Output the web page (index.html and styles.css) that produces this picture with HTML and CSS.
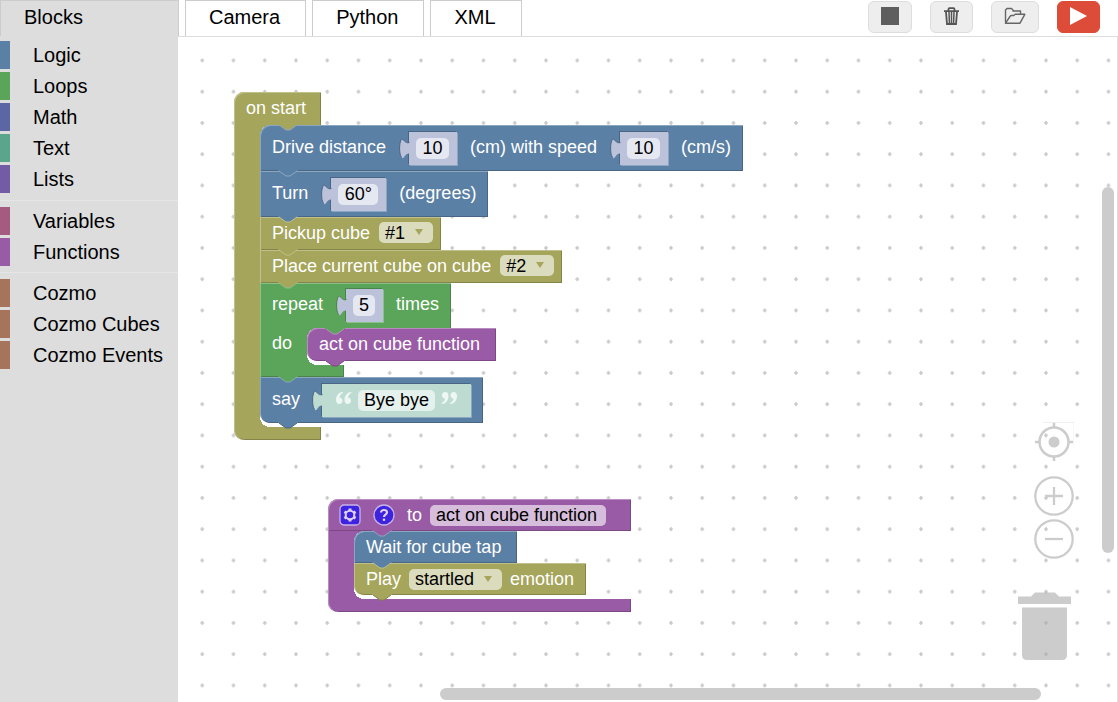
FILE: index.html
```html
<!DOCTYPE html>
<html lang="en">
<head>
<meta charset="utf-8">
<meta name="viewport" content="width=device-width, initial-scale=1">
<title>Blocks</title>
<link rel="stylesheet" href="styles.css">
</head>
<body>
<svg class="defs" aria-hidden="true">
  <symbol id="tab" viewBox="0 0 20 7">
    <path class="tab-fill" d="M0 0H20V1H19L12 6H8L1 1H0Z"/>
    <path class="tab-line" d="M1 1L8 6H12L19 1"/>
  </symbol>
  <symbol id="plug" viewBox="0 0 11 27">
    <path class="plug-fill" d="M11 10.500C8 11.500 6.500 10 5 8.500C3.500 7 2.500 6.500 2 8C1 10.500.6 13 .6 16C.6 20 1 23 2.500 25.500C3.500 27 4.500 26 5.500 24.500C7 22 8.500 21 11 21.500Z"/>
    <path class="plug-line" d="M10.500 10.500C8 11.500 6.500 10 5 8.500C3.500 7 2.500 6.500 2 8C1 10.500.6 13 .6 16C.6 20 1 23 2.500 25.500"/>
  </symbol>
  <symbol id="quote" viewBox="0 0 16 12">
    <path d="M7 0C3 0 0 3.500 0 8c0 2.500 1.300 4 3.300 4s3.200-1.400 3.200-3.200S5.300 5.500 3.500 5.500C3.800 3.500 5 2 7 1zM15.500 0C11.500 0 8.500 3.500 8.500 8c0 2.500 1.300 4 3.300 4s3.200-1.400 3.200-3.200-1.200-3.300-3-3.300c.3-2 1.500-3.500 3.500-4.500z"/>
  </symbol>
</svg>

<header class="topbar">
  <nav class="tabs">
    <button class="tab tab-active" type="button">Blocks</button>
    <button class="tab" type="button">Camera</button>
    <button class="tab" type="button">Python</button>
    <button class="tab" type="button">XML</button>
  </nav>
  <div class="actions">
    <button class="action action-stop" type="button" aria-label="Stop">
      <svg width="18" height="18" viewBox="0 0 18 18"><path fill="#5e5e5e" d="M0 0h18v18H0z"/></svg>
    </button>
    <button class="action" type="button" aria-label="Discard">
      <svg width="17" height="18" viewBox="0 0 17 18" fill="none" stroke="#555">
        <path stroke-width="1.800" d="M1 4.200h15M5.500 4V2.200q0-1 1-1h4q1 0 1 1V4"/>
        <path stroke-width="1.800" d="M3 5l1 12h9l1-12"/>
        <path stroke-width="1.500" d="M6 5l.4 11M8.500 5v11M11 5l-.4 11"/>
      </svg>
    </button>
    <button class="action action-wide" type="button" aria-label="Open">
      <svg width="22" height="18" viewBox="0 0 22 18" fill="none" stroke="#666" stroke-width="1.400" stroke-linejoin="round">
        <path d="M1.500 15.500V3L3 1.500h4.500L9 3v1h7.500v4"/>
        <path d="M1.500 16.200L6 9.500q.5-1 1.500-1h2.200l1.500-1.200h9.600L16 16.200z"/>
      </svg>
    </button>
    <button class="action action-run" type="button" aria-label="Run">
      <svg width="18" height="18" viewBox="0 0 18 18"><path fill="#fff" d="M0 0l17 9-17 9z"/></svg>
    </button>
  </div>
</header>

<main class="editor">
  <nav class="toolbox">
    <ul class="group">
      <li><a class="category logic" href="#logic">Logic</a></li>
      <li><a class="category loops" href="#loops">Loops</a></li>
      <li><a class="category math" href="#math">Math</a></li>
      <li><a class="category text" href="#text">Text</a></li>
      <li><a class="category lists" href="#lists">Lists</a></li>
    </ul>
    <ul class="group">
      <li><a class="category variables" href="#variables">Variables</a></li>
      <li><a class="category functions" href="#functions">Functions</a></li>
    </ul>
    <ul class="group">
      <li><a class="category cozmo" href="#cozmo">Cozmo</a></li>
      <li><a class="category cozmo" href="#cubes">Cozmo Cubes</a></li>
      <li><a class="category cozmo" href="#events">Cozmo Events</a></li>
    </ul>
  </nav>

  <section class="workspace" aria-label="Workspace">
    <svg class="grid" aria-hidden="true">
      <defs>
        <pattern id="dots" width="25" height="25" patternUnits="userSpaceOnUse" patternTransform="translate(8.600 7.800) scale(1.250)">
          <path d="M11 12.500h3M12.500 11v3" stroke="#c8c8c8" stroke-width="1.300"/>
        </pattern>
      </defs>
      <rect width="100%" height="100%" fill="url(#dots)"/>
    </svg>

    <div class="stack stack-start">
      <div class="wrap olive">
        <div class="head">
          <span>on start</span>
          <svg class="notch notch-inner next-blue"><use href="#tab"/></svg>
        </div>
        <div class="mouth">
          <div class="bar"></div>
          <div class="body">
            <div class="block value-row blue">
              <label for="distance">Drive distance</label>
              <span class="value number"><svg class="plug"><use href="#plug"/></svg><input id="distance" class="field w-two" value="10"></span>
              <label for="speed">(cm) with speed</label>
              <span class="value number"><svg class="plug"><use href="#plug"/></svg><input id="speed" class="field w-two" value="10"></span>
              <span>(cm/s)</span>
              <svg class="notch next-blue"><use href="#tab"/></svg>
            </div>
            <div class="block value-row blue">
              <label for="angle">Turn</label>
              <span class="value number"><svg class="plug"><use href="#plug"/></svg><input id="angle" class="field w-three" value="60°"></span>
              <span>(degrees)</span>
              <svg class="notch next-olive"><use href="#tab"/></svg>
            </div>
            <div class="block ends-drop olive">
              <label for="pickup">Pickup cube</label>
              <span class="drop"><select id="pickup" class="field"><option>#1</option></select></span>
              <svg class="notch next-olive"><use href="#tab"/></svg>
            </div>
            <div class="block ends-drop olive">
              <label for="place">Place current cube on cube</label>
              <span class="drop"><select id="place" class="field"><option>#2</option></select></span>
              <svg class="notch next-green"><use href="#tab"/></svg>
            </div>
            <div class="wrap green">
              <div class="block value-row green">
                <label for="times">repeat</label>
                <span class="value number"><svg class="plug"><use href="#plug"/></svg><input id="times" class="field w-one" value="5"></span>
                <span>times</span>
              </div>
              <div class="mouth">
                <div class="bar bar-do">do</div>
                <div class="body">
                  <div class="block plain purple">
                    <svg class="notch notch-top in-green"><use href="#tab"/></svg>
                    <span>act on cube function</span>
                    <svg class="notch next-none"><use href="#tab"/></svg>
                  </div>
                </div>
              </div>
              <div class="foot foot-do">
                <svg class="notch next-blue"><use href="#tab"/></svg>
              </div>
            </div>
            <div class="block value-row blue">
              <label for="phrase">say</label>
              <span class="value string"><svg class="plug"><use href="#plug"/></svg><svg class="quote"><use href="#quote"/></svg><input id="phrase" class="field w-phrase" value="Bye bye"><svg class="quote quote-end"><use href="#quote"/></svg></span>
              <svg class="notch next-none"><use href="#tab"/></svg>
            </div>
          </div>
        </div>
        <div class="foot"></div>
      </div>
    </div>

    <div class="stack stack-function">
      <div class="wrap purple">
        <div class="head head-function">
          <button class="badge" type="button" aria-label="Settings">
            <svg width="22" height="22" viewBox="0 0 22 22">
              <rect x="1" y="1" width="20" height="20" rx="4" fill="#3d22df" stroke="#c8b2e8" stroke-width="1.300"/>
              <circle cx="11" cy="11" r="4.300" fill="none" stroke="#e0d2f2" stroke-width="2"/>
              <path stroke="#e0d2f2" stroke-width="3" d="M11 4.500v2M11 15.500v2M5.400 7.800l1.700 1M14.900 13.200l1.700 1M5.400 14.200l1.700-1M14.900 8.800l1.700-1"/>
            </svg>
          </button>
          <button class="badge" type="button" aria-label="Help">
            <svg width="22" height="22" viewBox="0 0 22 22">
              <circle cx="11" cy="11" r="10" fill="#3d22df" stroke="#c8b2e8" stroke-width="1.300"/>
              <path fill="none" stroke="#e0d2f2" stroke-width="2.200" d="M8 8.500q.2-2.500 3-2.500t3 2.300q0 1.300-1.500 2.300T11 13"/>
              <circle cx="11" cy="15.800" r="1.300" fill="#e0d2f2"/>
            </svg>
          </button>
          <label for="fn">to</label>
          <input id="fn" class="field w-name" value="act on cube function">
          <svg class="notch notch-inner next-blue"><use href="#tab"/></svg>
        </div>
        <div class="mouth">
          <div class="bar"></div>
          <div class="body">
            <div class="block plain blue">
              <span>Wait for cube tap</span>
              <svg class="notch next-olive"><use href="#tab"/></svg>
            </div>
            <div class="block olive">
              <label for="emotion">Play</label>
              <span class="drop"><select id="emotion" class="field"><option>startled</option></select></span>
              <span>emotion</span>
              <svg class="notch next-none"><use href="#tab"/></svg>
            </div>
          </div>
        </div>
        <div class="foot foot-function"></div>
      </div>
    </div>

    <div class="zoom">
      <button class="round" type="button" aria-label="Center">
        <svg width="40" height="40" viewBox="0 0 40 40" fill="none" stroke="#ccc" stroke-width="2.500">
          <circle cx="20" cy="20" r="14.500"/><circle cx="20" cy="20" r="5.500" fill="#ccc" stroke="none"/>
          <path d="M20 1v5M20 34v5M1 20h5M34 20h5"/>
          <path d="M9 .5h31v23" stroke="#eee" stroke-width="1"/>
        </svg>
      </button>
      <div class="zoom-pair">
        <button class="round" type="button" aria-label="Zoom in">
          <svg width="40" height="40" viewBox="0 0 40 40" fill="none" stroke="#ccc" stroke-width="2.300">
            <circle cx="20" cy="20" r="18.700"/><path d="M11 20h18M20 11v18"/>
          </svg>
        </button>
        <button class="round" type="button" aria-label="Zoom out">
          <svg width="40" height="40" viewBox="0 0 40 40" fill="none" stroke="#ccc" stroke-width="2.300">
            <circle cx="20" cy="20" r="18.700"/><path d="M11 20h18"/>
          </svg>
        </button>
      </div>
    </div>
    <svg class="trash" width="54" height="68" viewBox="0 0 54 68" role="img" aria-label="Trash">
      <path d="M1 4.500h13l4-4h20l4 4h12V12H1zM5 15.500h45V63q0 5-5 5H10q-5 0-5-5z"/>
    </svg>
    <div class="scroll scroll-y"></div>
    <div class="scroll scroll-x"></div>
  </section>
</main>
</body>
</html>
```
FILE: styles.css
```css
* { box-sizing: border-box; }

body {
  margin: 0;
  min-height: 100vh;
  display: flex;
  flex-direction: column;
  background: #fff;
  color: #000;
  font: 20px/28px "Liberation Sans", Arial, sans-serif;
}

button, input, select { font: inherit; color: inherit; margin: 0; }

.defs { position: absolute; width: 0; height: 0; }

/* Top bar */
.topbar { display: flex; justify-content: space-between; height: 36px; }
.tabs { display: flex; gap: 6px; }
.tab {
  padding: 0 25px 2px 23px;
  border: 1px solid #ccc;
  border-bottom: 0;
  background: #fff;
  line-height: 33px;
}
.tab-active {
  width: 179px;
  background: #ddd;
  text-align: left;
}
.actions { display: flex; gap: 18px; padding: 1px 18px 3px 0; }
.action {
  display: flex;
  align-items: center;
  justify-content: center;
  width: 43px;
  padding: 0 0 2px;
  border: 1px solid #ddd;
  border-radius: 6px;
  background: #eee;
}
.action-stop { width: 44px; }
.action-wide { width: 48px; }
.action-run { border-color: #dd4b39; background: #dd4b39; }

/* Toolbox */
.editor { display: flex; flex: 1; }
.toolbox { width: 178px; padding-top: 5px; background: #ddd; }
.group {
  display: flex;
  flex-direction: column;
  gap: 3px;
  margin: 0;
  padding: 0 0 6px;
  list-style: none;
}
.group:first-child { padding-bottom: 7px; }
.group + .group { border-top: 1px solid #e5e5e5; padding-top: 6px; }
.category {
  display: block;
  height: 28px;
  padding-left: 23px;
  border-left: 10px solid;
  color: #000;
  text-decoration: none;
}
.logic { border-color: #5b80a5; }
.loops { border-color: #5ba55b; }
.math { border-color: #5b67a5; }
.text { border-color: #5ba58c; }
.lists { border-color: #745ba5; }
.variables { border-color: #a55b80; }
.functions { border-color: #995ba5; }
.cozmo { border-color: #a5745b; }

/* Workspace */
.workspace {
  position: relative;
  flex: 1;
  overflow: hidden;
  border: solid #ddd;
  border-width: 1px 1px 0 0;
  color: #fff;
  font-size: 18px;
  line-height: 20px;
}
.grid { position: absolute; inset: 0; width: 100%; height: 100%; }
.stack { position: absolute; }
.stack-start { left: 56px; top: 55px; --row: 33px; }
.stack-function { left: 150px; top: 462px; --row: 32px; }

.blue { --fill: #5b80a5; --light: #8ca6c0; --dark: #496684; }
.olive { --fill: #a5a55b; --light: #c0c08c; --dark: #848449; }
.green { --fill: #5ba55b; --light: #8cc08c; --dark: #498449; }
.purple { --fill: #995ba5; --light: #b88cc0; --dark: #7a4984; }
.next-blue { --line: #8ca6c0; }
.next-olive { --line: #c0c08c; }
.next-green { --line: #8cc08c; }
.next-none { --line: var(--dark); }

.wrap { display: flex; flex-direction: column; align-items: flex-start; }
.head, .block {
  position: relative;
  display: flex;
  align-items: center;
  gap: 9px;
  width: max-content;
  min-height: var(--row);
  padding: 0 12px 2px;
  background: var(--fill);
  box-shadow: inset 1px 1px var(--light), inset -1px -1px var(--dark);
  white-space: nowrap;
}
.plain { padding-right: 16px; }
.ends-drop { padding-right: 8px; }
.stack-function .block { padding-bottom: 0; gap: 8px; }
.head { border-top-left-radius: 10px; padding-right: 15px; box-shadow: inset 1px 1px var(--light), inset -1px 0 var(--dark); }
.head-function { gap: 12px; padding: 0 25px 0 11px; box-shadow: inset 1px 1px var(--light), inset -1px -1px var(--dark); }
.head-function .field { margin-left: -4px; }
.value-row { min-height: 46px; gap: 13px; padding-bottom: 3px; }
.wrap > .value-row { min-height: 45px; box-shadow: inset 1px 1px var(--light), inset -1px 0 var(--dark); }
.mouth { display: flex; }
.bar { width: 26px; background: var(--fill); box-shadow: inset 1px 0 var(--light); }
.bar-do { width: 47px; padding: 5px 12px; }
.body {
  padding-bottom: 4px;
  background:
    radial-gradient(circle at 100% 100%, transparent 10px, var(--fill) 10px) 0 0 / 10px 10px no-repeat,
    radial-gradient(circle at 100% 0, transparent 10px, var(--fill) 10px) 0 100% / 10px 10px no-repeat;
}
.body > .block:first-child { border-top-left-radius: 10px; }
.body > .block:last-child { border-bottom-left-radius: 10px; }
.foot {
  position: relative;
  width: 87px;
  height: 13px;
  border-bottom-left-radius: 10px;
  background: var(--fill);
  box-shadow: inset 1px 0 var(--light), inset -1px -1px var(--dark);
}
.foot-do { width: 84px; height: 12px; border-radius: 0; }
.foot-function { width: 303px; }

/* Connector between stacked blocks */
.notch { position: absolute; z-index: 1; left: 18px; bottom: -6px; width: 20px; height: 7px; }
.notch-inner { left: 44px; }
.notch-top { top: 0; bottom: auto; }
.in-green { --fill: #5ba55b; --line: #b88cc0; }
.tab-fill { fill: var(--fill); }
.tab-line { fill: none; stroke: var(--line); }

/* Plugged-in values */
.value {
  position: relative;
  display: flex;
  align-items: center;
  height: 33px;
  margin: 3px 0 0 10px;
  padding: 0 8px 0 7px;
  background: var(--shade);
  box-shadow: -1px -1px var(--dark), 1px 1px var(--light);
}
.number { --shade: #bdc2db; }
.string { --shade: #bddbd1; gap: 6px; margin-left: 9px; padding: 0 14px; }
.plug { position: absolute; left: -10px; top: 0; width: 11px; height: 27px; }
.plug-fill { fill: var(--shade); }
.plug-line { fill: none; stroke: var(--dark); }
.quote { width: 16px; height: 12px; margin-bottom: 4px; fill: #eef7f4; }
.quote-end { transform: rotate(180deg); }

.field {
  height: 21px;
  padding: 0 6px;
  border: 0;
  border-radius: 5px;
  background: rgba(255, 255, 255, 0.6);
  color: #000;
  line-height: 20px;
}
.number .field { text-align: center; padding: 0; }
.w-one { width: 22px; }
.w-two { width: 33px; }
.w-three { width: 40px; }
.w-phrase { width: 77px; }
.w-name { width: 176px; }

.drop { position: relative; display: flex; }
.drop .field { appearance: none; padding-right: 27px; }
.drop::after {
  content: "";
  position: absolute;
  right: 10px;
  top: 7px;
  border: solid transparent;
  border-width: 6px 4px 0;
  border-top-color: var(--fill);
}

.badge { display: flex; padding: 0; border: 0; background: none; }

/* Controls over the canvas */
.zoom {
  position: absolute;
  right: 43px;
  bottom: 143px;
  display: flex;
  flex-direction: column;
  gap: 14px;
}
.zoom-pair { display: flex; flex-direction: column; gap: 3px; }
.round { display: flex; padding: 0; border: 0; background: none; }
.trash { position: absolute; right: 46px; bottom: 42px; fill: rgba(170, 170, 170, 0.6); }
.scroll { position: absolute; border-radius: 6px; background: #ccc; }
.scroll-y { right: 3px; top: 150px; width: 12px; height: 366px; }
.scroll-x { right: 76px; bottom: 2px; width: 601px; height: 12px; }
```
